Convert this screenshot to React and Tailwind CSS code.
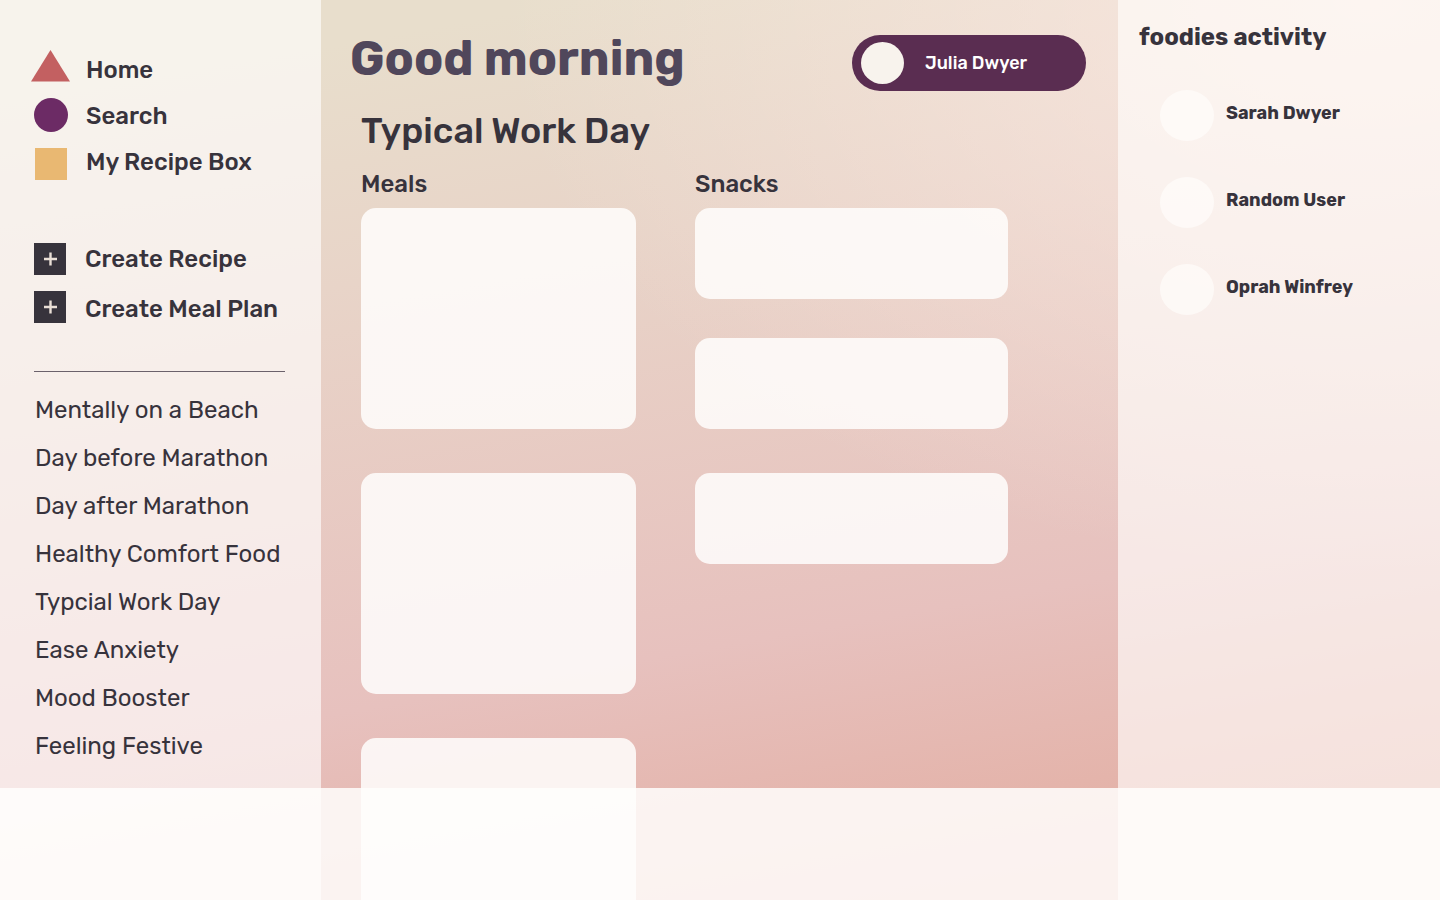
const INK = "text-[#37333c]";

function TriangleIcon() {
  return (
    <svg className="h-[46px] w-10 shrink-0" viewBox="0 0 40 46" aria-hidden="true">
      <path d="M19.5 3L39 34.6H0Z" fill="#c36061" />
    </svg>
  );
}

function CircleIcon() {
  return (
    <svg className="h-[46px] w-10 shrink-0" viewBox="0 0 40 46" aria-hidden="true">
      <circle cx="20" cy="22" r="17" fill="#6c2b65" />
    </svg>
  );
}

function SquareIcon() {
  return (
    <svg className="h-[46px] w-10 shrink-0" viewBox="0 0 40 46" aria-hidden="true">
      <rect x="4" y="9" width="32" height="32" fill="#e9b872" />
    </svg>
  );
}

function PlusIcon({ top }) {
  return (
    <svg className="h-[50px] w-[39px] shrink-0" viewBox="0 0 39 50" aria-hidden="true">
      <rect x="3" y={top} width="32" height="32" fill="#37333c" />
      <path d={`M13 ${top + 16}h13M19.5 ${top + 9.5}v13`} stroke="#eadfd6" strokeWidth="2.4" fill="none" />
    </svg>
  );
}

const links = [
  { label: "Home", icon: <TriangleIcon /> },
  { label: "Search", icon: <CircleIcon /> },
  { label: "My Recipe Box", icon: <SquareIcon /> },
];

const actions = [
  { label: "Create Recipe", icon: <PlusIcon top={9} /> },
  { label: "Create Meal Plan", icon: <PlusIcon top={7} /> },
];

const plans = [
  "Mentally on a Beach",
  "Day before Marathon",
  "Day after Marathon",
  "Healthy Comfort Food",
  "Typcial Work Day",
  "Ease Anxiety",
  "Mood Booster",
  "Feeling Festive",
];

const foodies = ["Sarah Dwyer", "Random User", "Oprah Winfrey"];

function Sidebar() {
  return (
    <aside className="w-[321px] shrink-0 bg-[#fffdfd]/65 pt-[47px]">
      <nav aria-label="Main" className="pl-[31px]">
        {links.map((link) => (
          <a key={link.label} href="#" className="flex items-center gap-[15px] text-2xl font-medium">
            {link.icon}
            {link.label}
          </a>
        ))}
      </nav>
      <div className="mt-[49px] pl-[31px]">
        {actions.map((action) => (
          <button key={action.label} type="button" className="flex items-center gap-[15px] text-2xl font-medium">
            {action.icon}
            {action.label}
          </button>
        ))}
      </div>
      <hr className="mt-[37px] mr-9 ml-[34px] border-[#6b616b]" />
      <ul className="mt-[14px] pl-[35px]">
        {plans.map((plan) => (
          <li key={plan} className="text-2xl leading-[48px] whitespace-nowrap">
            <a href="#">{plan}</a>
          </li>
        ))}
      </ul>
    </aside>
  );
}

function SnackCard() {
  return <div className="h-[91px] rounded-[15px] bg-[#fffefd]/85" />;
}

function MealCard() {
  return <div className="h-[221px] shrink-0 rounded-[15px] bg-[#fffefd]/85" />;
}

export default function App() {
  return (
    <div
      className={`relative flex h-screen overflow-hidden bg-[radial-gradient(ellipse_at_95%_0%,rgba(255,236,232,0.7),transparent_45%),linear-gradient(170deg,#e8decc_9%,#e8d4c8_30%,#e7c1be_67%,#e2ab9e_96%)] font-['Rubik','Inter',sans-serif] ${INK}`}
    >
      <Sidebar />

      <main className="min-w-0 flex-1">
        <header className="flex items-start justify-between pt-[35px] pr-8 pl-[29px]">
          <h1 className="text-5xl leading-[48px] font-bold text-[#50475b]">Good morning</h1>
          <button
            type="button"
            className="flex h-14 w-[234px] items-center gap-[21px] rounded-full bg-[#5a2d51] pl-[9px] text-lg font-medium text-white"
          >
            <span className="h-[42px] w-[43px] rounded-[50%] bg-[#f8f3ed]" />
            Julia Dwyer
          </button>
        </header>

        <div className="pr-[110px] pl-10">
          <h2 className="mt-5 text-4xl leading-10 font-medium">Typical Work Day</h2>
          <div className="mt-[17px] grid grid-cols-[275fr_313fr] gap-[59px]">
            <section>
              <h3 className="text-2xl leading-8 font-medium">Meals</h3>
              <div className="mt-2 flex flex-col gap-11">
                <MealCard />
                <MealCard />
                <MealCard />
              </div>
            </section>
            <section>
              <h3 className="text-2xl leading-8 font-medium">Snacks</h3>
              <div className="mt-2 flex flex-col gap-11">
                <div className="flex flex-col gap-[39px]">
                  <SnackCard />
                  <SnackCard />
                </div>
                <SnackCard />
              </div>
            </section>
          </div>
        </div>
      </main>

      <aside className="w-[322px] shrink-0 bg-[#fffdfb]/65 pt-[21px] pl-[21px]">
        <h2 className="text-2xl leading-8 font-bold">foodies activity</h2>
        <ul className="mt-[37px] flex flex-col gap-9 pl-[21px]">
          {foodies.map((name) => (
            <li key={name} className="flex items-start gap-3">
              <span className="h-[51px] w-[54px] rounded-[50%] bg-[#fffdfb]/70" />
              <a href="#" className="text-lg leading-[46px] font-bold">
                {name}
              </a>
            </li>
          ))}
        </ul>
      </aside>

      <footer className="absolute inset-x-0 bottom-0 h-28 bg-[#fffefd]/85" />
    </div>
  );
}
